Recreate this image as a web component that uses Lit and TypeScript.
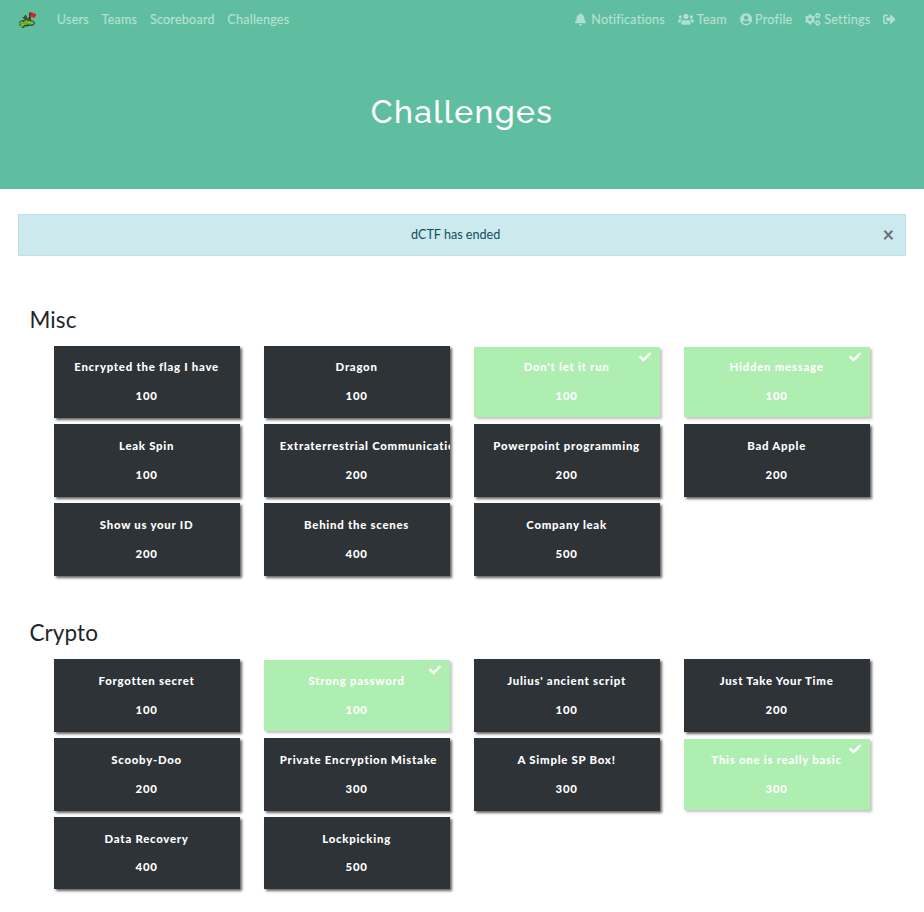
import { LitElement, html, css, svg } from "lit";
import { customElement, property } from "lit/decorators.js";

const gear = (cx: number, cy: number, r: number, hole: number, teeth: number, turn = 0) => {
  const pts: string[] = [];
  const step = (Math.PI * 2) / teeth;
  for (let i = 0; i < teeth; i++) {
    const a = i * step + turn;
    for (const [o, k] of [[-0.3, 0.78], [-0.22, 1], [0.22, 1], [0.3, 0.78]]) {
      pts.push(`${(cx + Math.cos(a + o * step) * r * k).toFixed(1)} ${(cy + Math.sin(a + o * step) * r * k).toFixed(1)}`);
    }
  }
  return `M${pts.join("L")}ZM${cx - hole} ${cy}a${hole} ${hole} 0 1 0 ${hole * 2} 0a${hole} ${hole} 0 1 0 ${-hole * 2} 0Z`;
};

const ICONS: Record<string, [number, string]> = {
  bell: [448, "M224 512c35.32 0 63.97-28.65 63.97-64H160.03c0 35.35 28.65 64 63.97 64zm215.39-149.71c-19.32-20.76-55.47-51.99-55.47-154.29 0-77.7-54.48-139.9-127.94-155.16V32c0-17.67-14.32-32-31.98-32s-31.98 14.33-31.98 32v20.84C118.56 68.1 64.08 130.3 64.08 208c0 102.3-36.15 133.53-55.47 154.29-6 6.45-8.66 14.16-8.61 21.71.11 16.4 12.98 32 32.1 32h383.8c19.12 0 32-15.6 32.1-32 .05-7.55-2.61-15.27-8.61-21.71z"],
  users: [640, "M96 224c35.3 0 64-28.7 64-64s-28.7-64-64-64-64 28.7-64 64 28.7 64 64 64zm448 0c35.3 0 64-28.7 64-64s-28.7-64-64-64-64 28.7-64 64 28.7 64 64 64zm32 32h-64c-17.6 0-33.5 7.1-45.1 18.6 40.3 22.1 68.9 62 75.1 109.4h66c17.7 0 32-14.3 32-32v-32c0-35.3-28.7-64-64-64zm-256 0c61.9 0 112-50.1 112-112S381.9 32 320 32 208 82.1 208 144s50.1 112 112 112zm76.8 32h-8.3c-20.8 10-43.9 16-68.5 16s-47.6-6-68.5-16h-8.3C179.6 288 128 339.6 128 403.2V432c0 26.5 21.5 48 48 48h288c26.5 0 48-21.5 48-48v-28.8c0-63.6-51.6-115.2-115.2-115.2zm-223.7-13.4C161.5 263.1 145.6 256 128 256H64c-35.3 0-64 28.7-64 64v32c0 17.7 14.3 32 32 32h65.9c6.3-47.4 34.9-87.3 75.2-109.4z"],
  profile: [496, "M248 8C111 8 0 119 0 256s111 248 248 248 248-111 248-248S385 8 248 8zm0 96c48.6 0 88 39.4 88 88s-39.4 88-88 88-88-39.4-88-88 39.4-88 88-88zm0 344c-58.7 0-111.3-26.6-146.5-68.2 18.8-35.4 55.6-59.8 98.5-59.8 2.4 0 4.8.4 7.1 1.1 13 4.2 26.6 6.9 40.9 6.9 14.3 0 28-2.7 40.9-6.9 2.3-.7 4.7-1.1 7.1-1.1 42.9 0 79.7 24.4 98.5 59.8C359.3 421.4 306.7 448 248 448z"],
  cogs: [640, gear(205, 256, 215, 68, 6, Math.PI / 6) + gear(515, 104, 122, 38, 6, 0) + gear(515, 408, 122, 38, 6, 0)],
  logout: [512, "M497 273L329 441c-15 15-41 4.5-41-17v-96H152c-13.3 0-24-10.7-24-24v-96c0-13.3 10.7-24 24-24h136V88c0-21.4 25.9-32 41-17l168 168c9.3 9.4 9.3 24.6 0 34zM192 436v-40c0-6.6-5.4-12-12-12H96c-17.7 0-32-14.3-32-32V160c0-17.7 14.3-32 32-32h84c6.6 0 12-5.4 12-12V76c0-6.6-5.4-12-12-12H96c-53 0-96 43-96 96v192c0 53 43 96 96 96h84c6.6 0 12-5.4 12-12z"],
  check: [512, "M173.898 439.404l-166.4-166.4c-9.997-9.997-9.997-26.206 0-36.204l36.203-36.204c9.997-9.998 26.207-9.998 36.204 0L192 312.69 432.095 72.596c9.997-9.997 26.207-9.997 36.204 0l36.203 36.204c9.997 9.997 9.997 26.206 0 36.204l-294.4 294.401c-9.998 9.997-26.207 9.997-36.204-.001z"],
};

@customElement("ctf-icon")
class CtfIcon extends LitElement {
  @property() name = "bell";
  static styles = css`
    :host { display: block; flex: none; }
    .glyph { display: block; height: var(--icon-size, 12.6px); width: auto; fill: currentColor; fill-rule: evenodd; }
  `;
  render() {
    const [w, d] = ICONS[this.name];
    return html`<svg class="glyph" viewBox="0 0 ${w} 512">${svg`<path d=${d}></path>`}</svg>`;
  }
}

@customElement("ctf-navbar")
class CtfNavbar extends LitElement {
  static styles = css`
    :host { display: flex; height: 39px; padding: 0 28px 0 19px; align-items: center; justify-content: space-between; box-sizing: border-box; color: rgba(255, 255, 255, 0.5); font-size: 12.6px; line-height: 19px; letter-spacing: 0.22px; -webkit-text-stroke: 0.25px rgba(255, 255, 255, 0.35); }
    .side { display: flex; align-items: center; }
    .logo { display: block; width: 19px; height: 17px; margin: 2px 6.2px 0 0; }
    .left { gap: 12.6px; }
    .right { gap: 12.9px; }
    .item { display: flex; align-items: center; gap: 3.2px; white-space: nowrap; }
    .wide { gap: 5.5px; }
  `;
  render() {
    return html`
      <div class="side left">
        <svg class="logo" viewBox="0 0 19 17">
          <path d="M6 3h1l2 4 1-2 2 0 0 3 3 1 1 2-1 2-3 1-3 0-2 1-1-1-1 2H3l-1-2-2-1V10l3-2 3 0L3 5l2 0z" fill="#2c5430"></path>
          <path d="M1 10l2-1 1 1 3-2 3 1 3 0 2 1-1 2-3 1-2-1-2 1-2 0-1 2-2 0 0-2-2-1z" fill="#68ac2b"></path>
          <path d="M6 4l2 3-1 1zM9 5l2 2-2 1z" fill="#6a5235"></path>
          <path d="M12 0l2 1 3 1 0 2-2 2-3-1z" fill="#ce2632"></path>
          <path d="M10 1l2-1 0 2-1 6-1 0z" fill="#59332a"></path>
          <path d="M9 10h2v1H9zM12 11h2v1h-2zM3 12h2v1H3z" fill="#91cf38"></path>
        </svg>
        <span>Users</span><span>Teams</span><span>Scoreboard</span><span>Challenges</span>
      </div>
      <div class="side right">
        <span class="item wide"><ctf-icon name="bell"></ctf-icon>Notifications</span>
        <span class="item"><ctf-icon name="users"></ctf-icon>Team</span>
        <span class="item"><ctf-icon name="profile"></ctf-icon>Profile</span>
        <span class="item"><ctf-icon name="cogs"></ctf-icon>Settings</span>
        <span class="item"><ctf-icon name="logout"></ctf-icon></span>
      </div>`;
  }
}

@customElement("challenge-card")
class ChallengeCard extends LitElement {
  @property() name = "";
  @property({ type: Number }) points = 0;
  @property({ type: Boolean, reflect: true }) solved = false;
  static styles = css`
    :host { display: block; height: 72.5px; }
    .card { position: relative; height: 100%; box-sizing: border-box; padding: 12.7px 16.6px 0 15.8px; background: #2d3337; color: #fff; box-shadow: 2.4px 2.4px 2.4px #696363; font-size: 11.4px; font-weight: 900; letter-spacing: 0.74px; line-height: 17px; text-align: center; }
    .clip { margin: 0 -16.6px 0 -15.8px; padding: 0 16.6px 0 15.8px; overflow: hidden; }
    .label { margin: 0 0 11.8px; white-space: nowrap; }
    .points { margin: 0; }
    .solved { height: 70.5px; margin-top: 1px; padding-top: 11.7px; background: #37d63e; opacity: 0.4; }
    :host([solved]) { display: grid; align-content: start; position: relative; }
    .overlay { position: absolute; right: 9px; top: 5px; color: #fff; --icon-size: 12px; }
  `;
  render() {
    return html`<div class="card ${this.solved ? "solved" : ""}">
        <div class="clip"><p class="label">${this.name}</p></div>
        <p class="points">${this.points}</p>
      </div>
      ${this.solved ? html`<ctf-icon class="overlay" name="check"></ctf-icon>` : ""}`;
  }
}

type Challenge = [string, number, boolean?];
const CATEGORIES: { title: string; items: Challenge[] }[] = [
  {
    title: "Misc",
    items: [
      ["Encrypted the flag I have", 100], ["Dragon", 100], ["Don't let it run", 100, true], ["Hidden message", 100, true],
      ["Leak Spin", 100], ["Extraterrestrial Communication", 200], ["Powerpoint programming", 200], ["Bad Apple", 200],
      ["Show us your ID", 200], ["Behind the scenes", 400], ["Company leak", 500],
    ],
  },
  {
    title: "Crypto",
    items: [
      ["Forgotten secret", 100], ["Strong password", 100, true], ["Julius' ancient script", 100], ["Just Take Your Time", 200],
      ["Scooby-Doo", 200], ["Private Encryption Mistake", 300], ["A Simple SP Box!", 300], ["This one is really basic", 300, true],
      ["Data Recovery", 400], ["Lockpicking", 500],
    ],
  },
];

@customElement("app-root")
class AppRoot extends LitElement {
  static styles = css`
    :host { display: block; height: 912px; overflow: hidden; background: #fff; font-family: Lato, "Liberation Sans", sans-serif; color: #212529; }
    .hero { height: 189px; background: #5fbea0; }
    .title { margin: 0; padding-top: 52px; text-align: center; color: #fff; font-family: Raleway, Lato, sans-serif; font-weight: 500; font-size: 32px; line-height: 42px; letter-spacing: 1.35px; }
    .alert { display: flex; align-items: center; height: 42px; box-sizing: border-box; margin: 25px 18px 0; padding: 0 11px 1px 0; background: #cce9ee; border: 1px solid #b8e1e8; color: #0c515d; font-size: 12.6px; }
    .message { flex: 1; text-align: center; padding-left: 10px; }
    .close { font-size: 20px; font-weight: 700; line-height: 19px; color: #647377; }
    .category { margin: 0 30px; }
    .category + .category { margin-top: 43.7px; }
    .board { padding-top: 49.6px; }
    .heading { margin: 0 0 12px; font-size: 22.5px; font-weight: 400; line-height: 28px; letter-spacing: 0.1px; text-indent: -0.5px; }
    .grid { display: grid; grid-template-columns: repeat(4, 186px); column-gap: 24px; row-gap: 6.3px; padding-left: 24px; }
  `;
  render() {
    return html`
      <header class="hero"><ctf-navbar></ctf-navbar><h1 class="title">Challenges</h1></header>
      <div class="alert"><span class="message">dCTF has ended</span><span class="close">×</span></div>
      <main class="board">
        ${CATEGORIES.map((c) => html`<section class="category">
          <h3 class="heading">${c.title}</h3>
          <div class="grid">
            ${c.items.map(([name, points, solved]) => html`<challenge-card .name=${name} .points=${points} .solved=${!!solved}></challenge-card>`)}
          </div>
        </section>`)}
      </main>`;
  }
}
